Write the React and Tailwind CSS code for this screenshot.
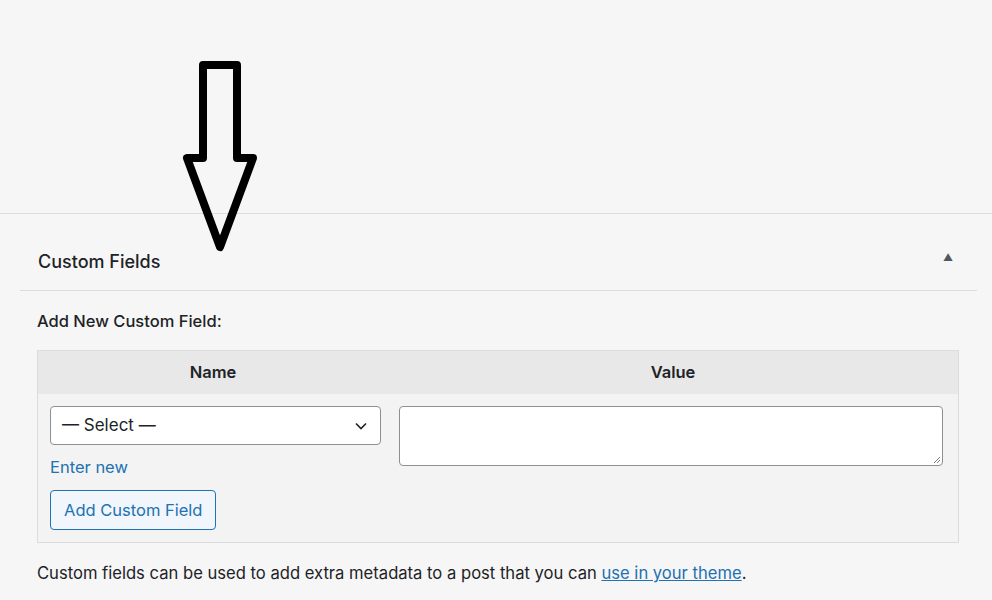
import React from 'react';

function DownArrow() {
  // big hand-drawn style outline arrow pointing at the panel
  return (
    <svg
      className="absolute left-[178px] top-[56px]"
      width="86"
      height="200"
      viewBox="0 0 86 200"
      fill="none"
    >
      <path
        d="M25 9 H59 V102 H75 L42 191 L9 102 H25 Z"
        stroke="#000"
        strokeWidth="8"
        strokeLinejoin="round"
      />
    </svg>
  );
}

function App() {
  return (
    <div
      className="relative w-[992px] h-[600px] overflow-hidden bg-[#f6f6f6] text-[#1d2327]"
      style={{ fontFamily: 'Inter, "Noto Sans", sans-serif' }}
    >
      <div className="h-[214px] border-b border-[#dcdcde]" />

      <div className="ml-[20px] mr-[15px]">
        <div className="h-[77px] flex items-center justify-between pl-[18px] pr-[24px] border-b border-[#dcdcde]">
          <h2 className="text-[18px] font-medium pt-[18px]">Custom Fields</h2>
          <span className="text-[10px] text-[#50575e] pt-[10px]">▲</span>
        </div>

        <div className="px-[17px]">
          <p className="pt-[20px] text-[16.5px] font-medium leading-[20px]">Add New Custom Field:</p>

          <div className="mt-[19px] w-[922px] border border-[#dcdcde] bg-[#f3f3f3]">
            <div className="grid grid-cols-[350px_1fr] h-[43px] items-center bg-[#e8e8e8] text-[16.5px] font-semibold">
              <div className="text-center">Name</div>
              <div className="text-center">Value</div>
            </div>

            <div className="grid grid-cols-[350px_1fr] pt-[12px] pb-[12px]">
              <div className="pl-[12px]">
                <div className="w-[331px] h-[39px] flex items-center justify-between px-[11px] border border-[#8c8f94] rounded-[4px] bg-white text-[17px]">
                  <span>— Select —</span>
                  <svg width="16" height="16" viewBox="0 0 16 16" fill="none">
                    <path d="M3 5.5 L8 10.5 L13 5.5" stroke="#1d2327" strokeWidth="1.6" />
                  </svg>
                </div>
                <a className="block mt-[11px] text-[16.5px] text-[#2271b1] leading-[22px]" href="#">
                  Enter new
                </a>
                <button className="mt-[12px] h-[40px] px-[13px] border border-[#2271b1] rounded-[4px] bg-[#f0f6fc] text-[16.5px] text-[#2271b1]">
                  Add Custom Field
                </button>
              </div>
              <div className="pl-[11px] pr-[15px]">
                <div className="relative h-[60px] border border-[#8c8f94] rounded-[4px] bg-white">
                  <svg className="absolute right-[1px] bottom-[1px]" width="10" height="10" viewBox="0 0 10 10">
                    <path d="M9 3 L3 9 M9 6 L6 9" stroke="#777" strokeWidth="1" />
                  </svg>
                </div>
              </div>
            </div>
          </div>

          <p className="mt-[19px] text-[16.6px] leading-[22px]">
            Custom fields can be used to add extra metadata to a post that you can{' '}
            <a href="#" className="text-[#2271b1] underline">use in your theme</a>.
          </p>
        </div>
      </div>

      <DownArrow />
    </div>
  );
}

export default App;
